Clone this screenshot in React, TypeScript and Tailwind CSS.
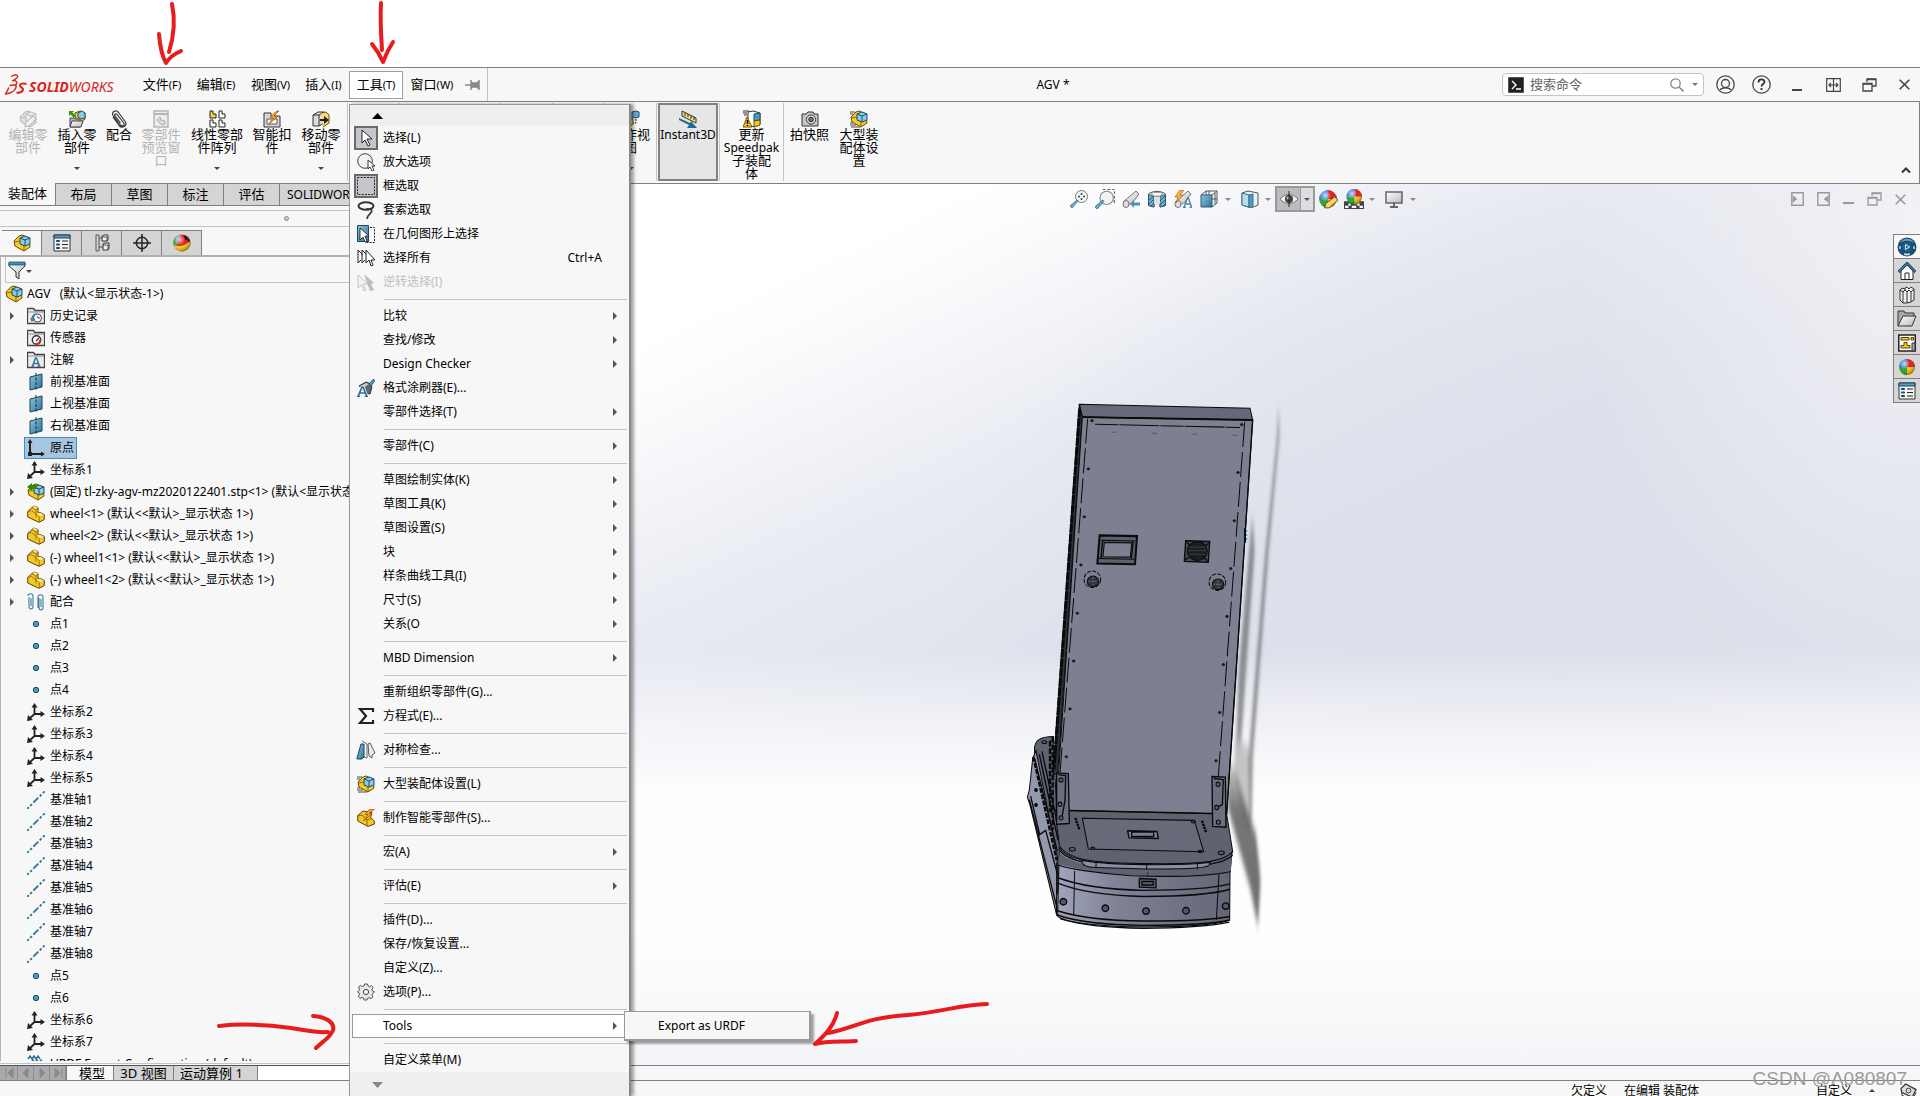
import React from "react";

const Svg = ({ children, className = "size-[18px]", box = "0 0 18 18" }: { children: React.ReactNode; className?: string; box?: string }) => (
  <svg viewBox={box} className={`${className} shrink-0`} fill="none" aria-hidden="true">
    {children}
  </svg>
);

const Defs = () => (
  <svg className="absolute size-0" aria-hidden="true">
    <defs>
      <linearGradient id="blue" x1="0" y1="0" x2="1" y2="1">
        <stop offset="0" stopColor="#8fc6dd" />
        <stop offset="1" stopColor="#2d7396" />
      </linearGradient>
      <linearGradient id="grey" x1="0" y1="0" x2="1" y2="1">
        <stop offset="0" stopColor="#fff" />
        <stop offset="1" stopColor="#b9b9b9" />
      </linearGradient>
      <radialGradient id="gloss" cx=".35" cy=".3" r=".7">
        <stop offset="0" stopColor="#fff" stopOpacity=".75" />
        <stop offset=".5" stopColor="#fff" stopOpacity="0" />
        <stop offset="1" stopColor="#000" stopOpacity=".35" />
      </radialGradient>
    </defs>
  </svg>
);

/* ---------- icons ---------- */
const PartIcon = () => (
  <Svg>
    <path d="M.7 6.500L5 2.500l2-1.500 4 1.500v5l2 0 4.300 2v5L12 17.300.7 12z" fill="#f4c824" stroke="#5d4108" />
    <path d="M5.500 2l2-1 3.500 1.500-2 1.500zM9 9l3.500-1.500L17 9.700 12 11.500z" fill="#fbe893" />
    <path d="M1 6.700L4.500 5.500 9 9v3.500M5 2.700L9 5V9l3.300 2.500V17M9 4.500l2-1.500" stroke="#8d6508" strokeWidth=".8" />
  </Svg>
);
const AsmShape = ({ yellow = "#f7cb24", edge = "#6b4a08", cube = "#8fc9e2", cubeEdge = "#18506c" }) => (
  <>
    <path d="M1 7l5-5 3-1 7 3 1 9-6 4L2 12z" fill={yellow} stroke={edge} />
    <path d="M2 8l4-1 5 5v4" stroke={edge} strokeWidth=".8" />
    <path d="M7 4l5-2 5 2v6l-5 2-5-2z" fill={cube} stroke={cubeEdge} />
    <path d="M7 4l5 2 5-2M12 6v6" stroke={cubeEdge} />
  </>
);
const AsmIcon = () => (
  <Svg>
    <AsmShape />
  </Svg>
);
const FastAsmIcon = () => (
  <Svg>
    <AsmShape />
    <path d="M0 2h5M0 4h3M0 13h3M0 15h6M1 17h9" stroke="#333" strokeWidth=".9" />
  </Svg>
);
const FixedAsmIcon = () => (
  <Svg>
    <AsmShape />
    <path d="M0 4l5-4v2h5v4H5v2z" fill="#2f8a12" />
  </Svg>
);
const GreyAsmPencil = () => (
  <Svg>
    <AsmShape yellow="#dedede" edge="#b5b5b5" cube="#eee" cubeEdge="#bbb" />
    <path d="m6 17 1-5 7-6 3 3-7 7z" fill="#eee" stroke="#b0b0b0" />
  </Svg>
);
const InsertIcon = () => (
  <Svg>
    <path d="M7 7V3l5-2 5 2v6l-4 3z" fill="#f7cb24" stroke="#6b4a08" />
    <path d="M10 3l4-2 3 2v5l-4 1-3-2z" fill="#8fc9e2" stroke="#18506c" />
    <path d="M2 8h4l1 1h5v8H2z" fill="#bbb" stroke="#444" />
    <path d="M4 11h11l-2 6H2z" fill="url(#grey)" stroke="#444" />
    <path d="M1 6V1h5L4.500 2.500 8 6 6 8 2.700 4.500z" fill="#2f9a18" />
  </Svg>
);
const ClipIcon = () => (
  <Svg>
    <path d="M3 7l6 8.500c3 3.500 8.500.5 6.500-3.500L8.500 2.500C6-.5 1 1.500 3 5.500l7.500 9.500c2 2 4.500.3 3.300-2L7 4.500C5.500 3 4 4 5 5.800l5.500 7.200" stroke="#3b3b3b" strokeWidth="1.200" />
  </Svg>
);
const PreviewIcon = () => (
  <Svg>
    <path d="M2 1h14v16H2z" fill="#ececec" stroke="#b5b5b5" strokeWidth="1.500" />
    <path d="M2 4h14" stroke="#b5b5b5" strokeWidth="2" />
    <path d="M5 10l3-3 1 3 4 1v3l-3 1z" fill="#ddd" stroke="#aaa" />
  </Svg>
);
const PatternIcon = () => (
  <Svg>
    <path d="M2 1h3v3h3v4H2z" fill="#f6d54a" stroke="#222" />
    <path d="M11 1h3v3h3v4h-6zM2 10h3v3h3v4H2zM11 10h3v3h3v4h-6z" fill="#fff" stroke="#222" />
  </Svg>
);
const SmartFastenerIcon = () => (
  <Svg>
    <path d="M1 3h7v3h9v11H1z" fill="#d8d8d8" stroke="#333" />
    <path d="M4 9h10v5H4z" fill="#fff" stroke="#555" />
    <path d="m14 1-7 6 3 1-4 6 8-7-3-1 5-5z" fill="#f6a81a" stroke="#b04a10" strokeWidth=".8" />
  </Svg>
);
const MoveIcon = () => (
  <Svg>
    <path d="M1 5l5-3h6v11l-5 3H1z" fill="#ddd" stroke="#333" />
    <path d="M1 5h6v11M7 5l5-3" stroke="#333" />
    <path d="M9 3l5-1 3 3v8l-6 4" fill="#f4dc75" stroke="#6b4a08" />
    <path d="M8 9h4V6l5 4-5 4v-3H8z" fill="#222" />
  </Svg>
);
const ExplodeIcon = () => (
  <Svg>
    <path d="M10 2l4-1 3 1v5l-3 1-4-1z" fill="#5fb0d4" stroke="#18506c" />
    <path d="M14 9v4H7" stroke="#222" strokeDasharray="2 1" />
    <path d="M2 9l5-2 4 2v5l-4 3-5-2z" fill="#f7cb24" stroke="#6b4a08" />
  </Svg>
);
const RulerIcon = () => (
  <Svg>
    <path d="M3 1l14 7v5L3 6z" fill="#f8dd6c" stroke="#333" />
    <path d="M6 3v3M9 4v3M12 6v3M15 7v3" stroke="#333" />
    <path d="M0 8l11 5 1-2 6 7H8l2-3L0 10z" fill="#1f6b96" />
  </Svg>
);
const UpdateIcon = () => (
  <Svg>
    <path d="M5 2l5-1 7 2v11l-6 3-6-3z" fill="#fff" stroke="#333" />
    <path d="M11 4l6-1v7l-6 1z" fill="#4d9cc0" stroke="#18506c" />
    <path d="M11 11l6-1v5l-6 2z" fill="#f7cb24" stroke="#6b4a08" />
    <path d="M0 1h6M0 3h4M1 5h3" stroke="#333" />
    <path d="M4 7l5 10H0z" fill="#f7c31a" stroke="#7a5300" />
    <path d="M4.500 10v4M4.500 15v1" stroke="#000" strokeWidth="1.500" />
  </Svg>
);
const CameraIcon = () => (
  <Svg>
    <path d="M1 4h4l2-2h5l1 2h4v12H1z" fill="#c5c5c5" stroke="#333" />
    <circle cx="10" cy="9.500" r="4.500" fill="#eee" stroke="#333" />
    <circle cx="10" cy="9.500" r="2.300" fill="#777" stroke="#222" />
  </Svg>
);
const ListIcon = () => (
  <Svg>
    <path d="M1 1h16v16H1z" fill="#f3f3f3" stroke="#333" />
    <path d="M1 1h16v3H1z" fill="#4f9dc0" stroke="#17465e" />
    <path d="M3.500 6.500h3v1h-3zM3.500 10h3v1h-3zM3.500 13.500h3v1h-3z" fill="#5ea9cb" stroke="#17465e" />
    <path d="M9 7h6M9 10.500h6M9 14h6" stroke="#222" />
  </Svg>
);
const ConfigIcon = () => (
  <Svg>
    <path d="M3 1h3v16H3zM6 4h4M6 13h4" stroke="#555" />
    <path d="M9 2l2-1h4v5l-1 1H9zM10 10l2-1h4v5l-1 2h-5z" fill="#eee" stroke="#333" />
    <path d="M9 3h5v4M10 11h5v5" stroke="#333" strokeWidth=".8" />
  </Svg>
);
const TargetIcon = () => (
  <Svg>
    <circle cx="9" cy="9" r="5.700" stroke="#222" strokeWidth="1.500" />
    <path d="M9 0v18M0 9h18" stroke="#222" strokeWidth="1.500" />
  </Svg>
);
const Ball = () => (
  <>
    <path d="M9 9V1a8 8 0 0 1 8 8z" fill="#e01b1b" />
    <path d="M9 9h8a8 8 0 0 1-8 8z" fill="#f2c417" />
    <path d="M9 9v8a8 8 0 0 1-8-8z" fill="#25a52c" />
    <path d="M9 9H1a8 8 0 0 1 8-8z" fill="#2f6fe0" />
    <circle cx="9" cy="9" r="8" fill="url(#gloss)" />
  </>
);
const BallIcon = () => (
  <Svg>
    <Ball />
  </Svg>
);
const DisplayBall = () => (
  <Svg>
    <circle cx="9" cy="9" r="8.500" fill="#e01b1b" />
    <path d="M9 .5C5 3 4 7 5 10L.7 11A8.500 8.500 0 0 1 9 .5z" fill="#5f9fd0" />
    <path d="M3 3c0 3 0 5 2 8l-4.300.5A8.500 8.500 0 0 1 3 3z" fill="#35a852" />
    <path d="M.8 11C6 13 12 12 17.300 7c1 6-3 10.500-8.300 10.500-4 0-7.500-3-8.200-6.500z" fill="#f5c91e" />
    <path d="M10 2c4-1 7 3 7 6-3-1-6-3-7-6z" fill="#2a0d0b" />
    <circle cx="9" cy="9" r="8.500" fill="url(#gloss)" />
  </Svg>
);
const PenBall = () => (
  <Svg className="size-[20px]">
    <Ball />
    <path d="M6 17l1-4 8-6 3 3-8 7z" fill="#f7d65a" stroke="#444" strokeWidth=".8" />
  </Svg>
);
const SceneBall = () => (
  <Svg className="size-[20px]">
    <path d="M0 11h18v7H0z" fill="#444" />
    <path d="M1 15h3v2H1zM7 15h4v2H7zM14 15h3v2h-3zM4 13h2v2H4zM12 13h2v2h-2z" fill="#fff" />
    <g transform="translate(1.300 -1) scale(.88)">
      <Ball />
    </g>
  </Svg>
);
const FilterIcon = () => (
  <Svg>
    <path d="M1 2h16v3l-6 6v7l-3-2v-5L1 5z" fill="url(#grey)" stroke="#333" />
    <path d="M1 1h16v3H1z" fill="#3f93ba" stroke="#17465e" strokeWidth=".7" />
  </Svg>
);
const Folder = ({ children }: { children: React.ReactNode }) => (
  <Svg>
    <path d="M.5 16.500V1.500h6l1.500 2h9.500v13z" fill="#ececec" stroke="#444" strokeWidth="1.300" />
    <path d="M1 5h16" stroke="#888" />
    {children}
  </Svg>
);
const HistoryIcon = () => (
  <Folder>
    <circle cx="10.500" cy="11" r="4" fill="#fff" stroke="#444" />
    <path d="M10 9l1 2h2" stroke="#444" />
    <path d="M4 11l1 3 3-2M5 13c0-4 2-6 5-6" stroke="#2b7da6" strokeWidth="1.400" />
  </Folder>
);
const SensorIcon = () => (
  <Folder>
    <circle cx="9.500" cy="11" r="4.200" fill="#fff" stroke="#333" strokeWidth="1.400" />
    <path d="M9 12l3-3" stroke="#333" strokeWidth="1.300" />
    <path d="M9 15c2 0 4-1 4-4" stroke="#d8331a" strokeWidth="2" />
  </Folder>
);
const NoteIcon = () => (
  <Folder>
    <path d="M5.500 15l3-8h1l3 8M7 12.500h4M4.500 15h2.500M10.500 15h3" stroke="#2f7398" strokeWidth="1.400" />
  </Folder>
);
const PlaneIcon = () => (
  <Svg>
    <path d="M3 4l12-3v13L3 17z" fill="url(#blue)" stroke="#17465e" />
    <path d="M9 0v18" stroke="#17303e" strokeDasharray="3 1.500" />
  </Svg>
);
const OriginIcon = () => (
  <Svg>
    <path d="M3 2v13h13" stroke="#222" strokeWidth="2" />
    <path d="M3 0l2.500 4h-5zM18 15l-4-2.500v5zM1 13h4v4H1z" fill="#222" />
  </Svg>
);
const AxesIcon = () => (
  <Svg>
    <path d="M7.500 3v8H15M7.500 11L2 16" stroke="#222" strokeWidth="1.800" />
    <path d="M7.500 0L10.500 4.500h-6zM18 11l-4.500-3v6zM0 18l1-6 5 5z" fill="#222" />
  </Svg>
);
const PointIcon = () => (
  <Svg>
    <circle cx="9" cy="9" r="2.700" fill="#4d9cc0" stroke="#17465e" />
  </Svg>
);
const AxisIcon = () => (
  <Svg>
    <path d="M0 18L18 0" stroke="#2d7396" strokeWidth="1.800" strokeDasharray="2.500 2 2.500 2 7 2 2.500 2" />
  </Svg>
);
const MatesIcon = () => (
  <Svg>
    <path d="M2 4v9c0 4 4 4 4 0V3c0-3-5-3-5 0M4 5v8M12 5v9c0 4 4 4 4 0V4c0-3-5-3-5 0v11M14 6v8" stroke="#3d7f9f" strokeWidth="1.100" />
  </Svg>
);
const CoilIcon = () => (
  <Svg>
    <path d="M1 4l2-3 2 3 2-3 2 3 2-3 2 3M4 8l2-3 2 3 2-3 2 3 2-3 2 3" stroke="#2f6f8e" strokeWidth="1.400" />
  </Svg>
);
const CursorIcon = () => (
  <Svg>
    <path d="M5 1v13l3-3 3 6 2-1-3-6h5z" fill="#fff" stroke="#222" />
  </Svg>
);
const MagSelIcon = () => (
  <Svg>
    <circle cx="8" cy="8" r="7.300" stroke="#444" fill="#f2f2f2" />
    <path d="M11 7v9l2-2 2 4 2-1-2-4h3z" fill="#fff" stroke="#222" strokeWidth=".9" />
  </Svg>
);
const BoxSelIcon = () => (
  <Svg>
    <path d="M.5.5h17v17H.5z" stroke="#222" strokeDasharray="2 1.200" />
  </Svg>
);
const LassoIcon = () => (
  <Svg>
    <ellipse cx="9" cy="5" rx="7.500" ry="3.800" stroke="#333" strokeWidth="2" />
    <path d="M9 8h4c4 1 0 5-2 7l-1 3" stroke="#333" strokeWidth="1.700" />
  </Svg>
);
const GeoSelIcon = () => (
  <Svg>
    <path d="M.5.5h11v16H.5z" fill="url(#blue)" stroke="#17465e" />
    <path d="M13 2.500h4.500v15H8" stroke="#222" strokeDasharray="2 1.200" />
    <path d="M3 3v12l3-3 2 5 2-1-2-5h4z" fill="#fff" stroke="#222" strokeWidth=".9" />
  </Svg>
);
const AllSelIcon = () => (
  <Svg>
    <path d="M1 1v13l3-3M1 1l5 5M5 1v13l3-3M5 1l5 5" stroke="#222" />
    <path d="M9 1v13l3-3 2 6 2-1-2-5h4z" fill="#fff" stroke="#222" />
  </Svg>
);
const InvSelIcon = () => (
  <Svg>
    <path d="M7 1l10 9-3 1 3 6-4 1z" fill="#bdbdbd" />
    <path d="M1 2v13l3-3 3 6 2-1-3-6h5z" fill="#f3f3f3" stroke="#c4c4c4" />
  </Svg>
);
const PaintIcon = () => (
  <Svg>
    <path d="M2 7l7-4 3 1 3 4-2 7-4-1-4-6z" fill="#666" stroke="#333" />
    <path d="M4 7l5-3 3 1-6 4z" fill="#ccc" />
    <path d="M12 5l4.500-5L18 1.500 14 7z" fill="#4d9cc0" stroke="#17465e" strokeWidth=".8" />
    <path d="M1 17.500L5 8h1l4 9.500M3 14h5M0 17.500h3M7.500 17.500h3.500" stroke="#f7f7f7" strokeWidth="3.200" />
    <path d="M1 17.500L5 8h1l4 9.500M3 14h5M0 17.500h3M7.500 17.500h3.500" stroke="#2b6f96" strokeWidth="1.700" />
  </Svg>
);
const SigmaIcon = () => (
  <Svg>
    <path d="M16 5V2H3l6 7-6 7h13v-3" stroke="#222" strokeWidth="2.200" />
  </Svg>
);
const SymIcon = () => (
  <Svg className="size-[20px]" box="0 0 20 20">
    <path d="M1 18L5 4h3v13l-2 2H1z" fill="url(#blue)" stroke="#17465e" />
    <path d="M6 1l5 3v14l-3-1" stroke="#666" />
    <path d="M12 4l2-1 5 10-3 2v3l-3-2z" fill="#eee" stroke="#555" />
  </Svg>
);
const SmartPartIcon = () => (
  <Svg>
    <path d="M.7 6.500L6 2l9 1.500-1.500 5 3.800 3.500v3L11 17.500.7 12z" fill="#f4c824" stroke="#5d4108" />
    <path d="M1 7l4-1 5 5v6M10 11l5-2" stroke="#8d6508" />
    <path d="M17.500 0H13L8 5.500h3L6.500 12 15 4.500h-3z" fill="#f8b030" stroke="#a8410c" strokeWidth=".8" />
  </Svg>
);
const GearIcon = () => (
  <Svg>
    <path d="M7.500 1h3l.5 2 1.500.7L14.500 2.500l1.500 2-1 2 .5 1.500L17.500 9l-2 1.500-.5 1.500 1 2-2 1.700-2-1-1.500.6-.5 1.700h-3L6.500 15 5 14.500l-2 .8-1.500-2 1-2-.5-1.500L.5 9 2 7.500 2.500 6l-1-2L3.500 2.500l2 1L7 3z" fill="#e6e6e6" stroke="#444" strokeWidth=".9" />
    <circle cx="9" cy="9" r="2.600" fill="#f7f7f7" stroke="#444" />
  </Svg>
);
const Caret = ({ c = "#444", className = "" }) => (
  <svg viewBox="0 0 6 3" className={`h-[3px] w-[6px] shrink-0 ${className}`} aria-hidden="true">
    <path d="M0 0h6L3 3z" fill={c} />
  </svg>
);
const RightTri = ({ className = "" }) => (
  <svg viewBox="0 0 4 8" className={`h-2 w-1 shrink-0 ${className}`} aria-hidden="true">
    <path d="M0 0l4 4-4 4z" fill="#555" />
  </svg>
);
const Handle = () => <path d="M8 11l-6 7-2-2 7-6z" fill="#6aaed0" stroke="#35708e" strokeWidth=".8" />;
const ZoomFit = () => (
  <Svg>
    <circle cx="11.500" cy="6.500" r="6" fill="#f2f5f8" stroke="#777" />
    <path d="M11.500 3v2M11.500 8v2M8 6.500h2M13 6.500h2" stroke="#444" strokeWidth="1.600" />
    <Handle />
  </Svg>
);
const ZoomArea = () => (
  <Svg className="size-[20px]">
    <path d="M7 .5h10.500V13" stroke="#666" strokeDasharray="2.500 1.500" />
    <circle cx="10.500" cy="8" r="6" fill="#eef3f3" stroke="#888" />
    <Handle />
  </Svg>
);
const Scope = ({ children }: { children?: React.ReactNode }) => (
  <Svg>
    <path d="M1 12l6-5 7-6 3 3-6 8-6 4z" fill="url(#grey)" stroke="#777" />
    <ellipse cx="4" cy="14" rx="3" ry="3.500" fill="#ddd" stroke="#777" />
    {children}
  </Svg>
);
const PrevView = () => (
  <Scope>
    <path d="M8 14l4-4v2.500h6v3h-6V18z" fill="#4d93b8" />
  </Scope>
);
const DynNote = () => (
  <Scope>
    <path d="M6 0L1 7h3l-2 6 7-8H6l4-5z" fill="#f9b44a" stroke="#b5632a" strokeWidth=".8" />
    <path d="M10 17l3.500-9h1l3 9M11.500 14h4.500M9 17.500h3M15.500 17.500H18" stroke="#4d86a6" strokeWidth="1.400" />
  </Scope>
);
const SectionView = () => (
  <Svg>
    <path d="M.5 4c4-3.500 13-3.500 17 0v11.500L12 17V7H6v10L.5 15.500z" fill="#f1f1f1" stroke="#555" />
    <path d="M.5 4.500L6 6.500V17L.5 15.500zM12 6.500l5.500-2v11L12 17z" fill="#6fb2d0" stroke="#285a74" />
    <path d="M1 10l4-3M1 14l5-5M3 16l3-3M12 11l5-5M12 15l5-5M15 16l2-2" stroke="#17465e" strokeWidth=".8" />
    <path d="M6 6.500h6V14l-3 1-3-1z" fill="#e0e0e0" />
    <path d="M3 3.500c3-1.500 9-1.500 12 0L12 6H6z" fill="#fff" stroke="#777" strokeWidth=".7" />
  </Svg>
);
const OrientIcon = () => (
  <Svg>
    <path d="M1 5l5-4h11v12l-5 4M12 5l5-4M6 1v4M9 1v4M12 9h5M15 3v11" stroke="#555" />
    <path d="M1 5h11v12H1z" fill="url(#blue)" stroke="#285a74" />
  </Svg>
);
const StyleIcon = () => (
  <Svg>
    <path d="M1 3l6-2 10 2v12l-7 3-9-3z" fill="#e8f2f6" stroke="#555" />
    <path d="M1 3l7 2v12l-7-2z" fill="#b8dcea" stroke="#35708e" />
    <path d="M8 5l4-1v12l-4 2z" fill="#4d9cc0" stroke="#35708e" />
  </Svg>
);
const EyeIcon = () => (
  <Svg>
    <path d="M0 9c5-6 13-6 18 0-5 6-13 6-18 0z" fill="#eee" stroke="#777" />
    <circle cx="9" cy="9" r="4" fill="#444" />
    <circle cx="8" cy="8" r="1.500" fill="#bbb" />
    <path d="M9 1v16" stroke="#222" />
  </Svg>
);
const MonitorIcon = () => (
  <Svg>
    <path d="M1 2h16v11H1z" fill="url(#grey)" stroke="#666" strokeWidth="1.500" />
    <path d="M9 13v4M5 17h8" stroke="#666" strokeWidth="2" />
  </Svg>
);
const CompassIcon = () => (
  <Svg className="size-[20px]" box="0 0 20 20">
    <circle cx="10" cy="10" r="9.500" fill="#174f70" />
    <path d="M3 6a8 8 0 0 1 14 0c-4-3-10-3-14 0z" fill="#6c9db5" />
    <circle cx="10" cy="10" r="4.500" fill="#1f658b" />
    <path d="M8.500 7.500l4 2.500-4 2.500z" stroke="#cfe6f2" />
    <path d="M3 9v3M17 9v3M8 16v1.500h4V16" stroke="#d5e6ef" strokeWidth="1.300" />
  </Svg>
);
const HomeIcon = () => (
  <Svg>
    <path d="M3 9l6-6 6 6v8.500H3z" fill="#fff" stroke="#222" />
    <path d="M7 17v-6h4v6" stroke="#222" />
    <path d="M.5 10L9 1.500l8.500 8.500" stroke="#17465e" strokeWidth="3" />
    <path d="M.8 9.700L9 1.500l8.200 8.200" stroke="#5ea9cb" />
  </Svg>
);
const BooksIcon = () => (
  <Svg>
    <path d="M2 4l3 2v11l-3-3zM5 6l2-2 2 2v11H5M7 4V2l2-1 2 2M9 6l2-2 2 2v10l-4 1M11 3l2-2 3 2v11l-3 2M13 6l3-3M2 4l2-2 3 1" fill="#eee" stroke="#333" />
  </Svg>
);
const OpenFolder = () => (
  <Svg className="size-[20px]" box="0 0 20 20">
    <path d="M1 17V2h6l1 2h9v3" fill="#aaa" stroke="#333" />
    <path d="M1 17L6 7h13l-4 10z" fill="url(#grey)" stroke="#333" />
  </Svg>
);
const ViewPalette = () => (
  <Svg>
    <path d="M.8 1h16.500v16H.8z" fill="#fff" stroke="#222" strokeWidth="1.500" />
    <path d="M3 3.500h8v2.500H3zM13 3.500h2.500V6H13zM6 8.500h3v3h3V14H3v-2.500h3z" fill="#f6cd2a" stroke="#5d4300" />
    <path d="M14 9h3v8h-3z" fill="#aaa" stroke="#333" />
  </Svg>
);
const PinIcon = () => (
  <Svg className="h-[10px] w-[15px]" box="0 0 15 10">
    <path d="M0 5h6M6 0v10M7 3l5 0 2-2v8l-2-2H7z" stroke="#888" fill="#888" strokeWidth="1.500" />
  </Svg>
);
const Restore = ({ c = "#444" }) => (
  <Svg className="h-[14px] w-[15px]" box="0 0 15 14">
    <path d="M5 4V1h9v7h-4M1 5.500h9V13H1z" stroke={c} strokeWidth="1.300" />
    <path d="M1 6h9M5 1.500h9" stroke={c} strokeWidth="1.500" />
  </Svg>
);
const CloseX = ({ c = "#444" }) => (
  <Svg className="size-[11px]" box="0 0 11 11">
    <path d="M.7.7l9.600 9.600M10.300.7L.7 10.300" stroke={c} strokeWidth="1.600" />
  </Svg>
);

/* ---------- title bar ---------- */
const Logo = () => (
  <div className="flex w-[135px] shrink-0 items-center gap-px pl-1 text-[#d8261c]" aria-label="SOLIDWORKS">
    <svg viewBox="0 0 24 22" className="h-[22px] w-6" fill="none" stroke="#d8261c" strokeLinejoin="round" aria-hidden="true">
      <path d="M7 2.500c3-2 7.500-2 6.500.5-1 2-3 3-5 3.800 4-.8 5.500 1.200 3 4.700" strokeWidth="1.400" />
      <path d="M5.500 11.500c4-1 7.500-1 6.500 2s-5 6-10.500 6.500L5 13.500" strokeWidth="1.500" />
      <path d="M22.500 10c-3-1-6.500-.5-6.500 1.500s4 2.500 3 4.500-3.500 3-6.500 2.800" strokeWidth="2" />
    </svg>
    <span className="pt-1 text-[14px] leading-4 italic">
      <b>SOLID</b>WORKS
    </span>
  </div>
);

const topMenus: [string, string, string][] = [
  ["文件", "(F)", "w-[54px]"],
  ["编辑", "(E)", "w-[54px]"],
  ["视图", "(V)", "w-[55px]"],
  ["插入", "(I)", "w-[51px]"],
  ["工具", "(T)", "w-[54px] bg-white border-[#a0a0a0]"],
  ["窗口", "(W)", "w-[58px]"],
];

const TitleBar = () => (
  <header className="flex h-[35px] shrink-0 items-center border-y border-[#808080] bg-[#f7f7f7]">
    <Logo />
    <nav className="flex h-full items-center border-r border-[#c0c0c0] pr-1">
      {topMenus.map(([t, k, w]) => (
        <button key={t} className={`flex h-7 items-center justify-center border text-[13px] ${w} ${w.includes("bg-white") ? "" : "border-transparent"}`}>
          {t}
          <span className="pt-0.5 text-[11px]">{k}</span>
        </button>
      ))}
      <button aria-label="固定" className="flex w-[22px] justify-center">
        <PinIcon />
      </button>
    </nav>
    <h1 className="flex-1 pl-[116px] text-center text-[12px]">AGV *</h1>
    <label className="mr-3 flex h-[23px] w-[202px] shrink-0 items-center rounded-sm border border-[#c4c4c4] bg-white px-[5px]">
      <Svg className="size-4" box="0 0 16 16">
        <path d="M.5.500h15v15H.5z" fill="#222" stroke="#555" />
        <path d="M4 4l4 4-4 4M8 12h5" stroke="#fff" strokeWidth="1.400" />
      </Svg>
      <input aria-label="搜索命令" placeholder="搜索命令" className="ml-1.5 w-0 flex-1 text-[13px] outline-none placeholder:text-[#666]" />
      <Svg className="size-[14px]" box="0 0 14 14">
        <circle cx="5.500" cy="5.500" r="4.700" stroke="#888" strokeWidth="1.300" />
        <path d="M9 9l4.500 4.500" stroke="#888" strokeWidth="1.600" />
      </Svg>
      <Caret c="#777" className="ml-2" />
    </label>
    <div className="flex shrink-0 items-center">
      <button aria-label="用户" className="flex w-9 justify-start">
        <Svg className="size-[19px]" box="0 0 19 19">
          <circle cx="9.500" cy="9.500" r="8.700" stroke="#444" strokeWidth="1.300" />
          <circle cx="9.500" cy="8.500" r="4" stroke="#444" strokeWidth="1.300" />
          <path d="M4 15c2-3 9-3 11 0" stroke="#444" strokeWidth="1.300" />
        </Svg>
      </button>
      <button aria-label="帮助" className="flex w-[38px]">
        <Svg className="size-[19px]" box="0 0 19 19">
          <circle cx="9.500" cy="9.500" r="8.700" stroke="#444" strokeWidth="1.300" />
          <path d="M6.500 7.500c0-4 6-4 6-.5 0 2-3 2-3 4.500M9.500 13v2" stroke="#333" strokeWidth="1.800" />
        </Svg>
      </button>
      <button aria-label="最小化" className="flex h-4 w-9 items-end pb-0.5 pl-0.5">
        <span className="h-0.5 w-[10px] bg-[#444]" />
      </button>
      <button aria-label="展开" className="flex w-9">
        <Svg className="h-[14px] w-[15px]" box="0 0 15 14">
          <path d="M.7.700h13.600v12.600H.7zM7.500 0v14M3 7h9M5 5L3 7l2 2M10 5l2 2-2 2" stroke="#444" strokeWidth="1.200" />
        </Svg>
      </button>
      <button aria-label="还原" className="flex w-[37px]">
        <Restore />
      </button>
      <button aria-label="关闭" className="flex w-[21px]">
        <CloseX />
      </button>
    </div>
  </header>
);

/* ---------- ribbon ---------- */
const RibbonItem = ({ icon, lines, w, disabled, caret, active }: { icon: React.ReactNode; lines: string[]; w: string; disabled?: boolean; caret?: boolean; active?: boolean }) => (
  <button disabled={disabled} className={`flex shrink-0 flex-col items-center text-[13px] leading-[13px] ${w} ${active ? "border-2 border-[#808080] bg-[#e6e6e6] pt-[5px] pb-0.5" : "py-[7px]"} ${disabled ? "text-[#b4b4b4]" : "text-black"}`}>
    {icon}
    {lines.map((l) => (
      <span key={l} className={`whitespace-nowrap ${/[A-Z]/.test(l) ? "text-[12px]" : ""}`}>
        {l}
      </span>
    ))}
    {caret && <Caret className="mt-auto mb-1" />}
  </button>
);
const Sep = () => <span className="w-px shrink-0 bg-[#c4c4c4]" />;

const Ribbon = () => (
  <section className="flex h-[81px] shrink-0 border-r border-[#808080] bg-[#f7f7f7] pt-px pb-0.5 pl-[3px]">
    <RibbonItem w="w-[50px]" icon={<GreyAsmPencil />} lines={["编辑零", "部件"]} disabled />
    <RibbonItem w="w-12" icon={<InsertIcon />} lines={["插入零", "部件"]} caret />
    <RibbonItem w="w-9" icon={<ClipIcon />} lines={["配合"]} />
    <RibbonItem w="w-12" icon={<PreviewIcon />} lines={["零部件", "预览窗", "口"]} disabled />
    <RibbonItem w="w-16" icon={<PatternIcon />} lines={["线性零部", "件阵列"]} caret />
    <RibbonItem w="w-[46px]" icon={<SmartFastenerIcon />} lines={["智能扣", "件"]} />
    <RibbonItem w="w-[52px]" icon={<MoveIcon />} lines={["移动零", "部件"]} caret />
    <Sep />
    <span className="w-[51px] shrink-0" />
    <Sep />
    <span className="w-[100px] shrink-0" />
    <Sep />
    <span className="w-[51px] shrink-0" />
    <Sep />
    <span className="w-[51px] shrink-0" />
    <Sep />
    <RibbonItem w="w-[51px]" icon={<ExplodeIcon />} lines={["爆炸视", "图"]} caret />
    <Sep />
    <span className="w-px shrink-0" />
    <RibbonItem w="w-[60px]" icon={<RulerIcon />} lines={["Instant3D"]} active />
    <span className="w-px shrink-0" />
    <Sep />
    <RibbonItem w="w-[63px]" icon={<UpdateIcon />} lines={["更新", "Speedpak", "子装配", "体"]} />
    <Sep />
    <RibbonItem w="w-[51px]" icon={<CameraIcon />} lines={["拍快照"]} />
    <RibbonItem w="w-12" icon={<FastAsmIcon />} lines={["大型装", "配体设", "置"]} />
    <button aria-label="收起" className="mt-auto mr-2 mb-2 ml-auto">
      <svg viewBox="0 0 10 6" className="h-1.5 w-[10px]" fill="none" aria-hidden="true">
        <path d="M1 5.500L5 1.500l4 4" stroke="#333" strokeWidth="2" />
      </svg>
    </button>
  </section>
);

/* ---------- feature tree ---------- */
type Row = { t: string; icon: React.ReactNode; open?: boolean; sel?: boolean };
const tree: Row[] = [
  { t: "历史记录", icon: <HistoryIcon />, open: true },
  { t: "传感器", icon: <SensorIcon /> },
  { t: "注解", icon: <NoteIcon />, open: true },
  { t: "前视基准面", icon: <PlaneIcon /> },
  { t: "上视基准面", icon: <PlaneIcon /> },
  { t: "右视基准面", icon: <PlaneIcon /> },
  { t: "原点", icon: <OriginIcon />, sel: true },
  { t: "坐标系1", icon: <AxesIcon /> },
  { t: "(固定) tl-zky-agv-mz2020122401.stp<1> (默认<显示状态-1>)", icon: <FixedAsmIcon />, open: true },
  { t: "wheel<1> (默认<<默认>_显示状态 1>)", icon: <PartIcon />, open: true },
  { t: "wheel<2> (默认<<默认>_显示状态 1>)", icon: <PartIcon />, open: true },
  { t: "(-) wheel1<1> (默认<<默认>_显示状态 1>)", icon: <PartIcon />, open: true },
  { t: "(-) wheel1<2> (默认<<默认>_显示状态 1>)", icon: <PartIcon />, open: true },
  { t: "配合", icon: <MatesIcon />, open: true },
  ...["点1", "点2", "点3", "点4"].map((t) => ({ t, icon: <PointIcon /> })),
  ...["坐标系2", "坐标系3", "坐标系4", "坐标系5"].map((t) => ({ t, icon: <AxesIcon /> })),
  ...[1, 2, 3, 4, 5, 6, 7, 8].map((n) => ({ t: `基准轴${n}`, icon: <AxisIcon /> })),
  ...["点5", "点6"].map((t) => ({ t, icon: <PointIcon /> })),
  ...["坐标系6", "坐标系7"].map((t) => ({ t, icon: <AxesIcon /> })),
  { t: "URDF Export Configuration (default)", icon: <CoilIcon /> },
];

const cmdTabs = ["装配体", "布局", "草图", "标注", "评估", "SOLIDWORKS 插件"];
const panelTabs = [
  { n: "特征树", i: <AsmIcon /> },
  { n: "属性", i: <ListIcon /> },
  { n: "配置", i: <ConfigIcon /> },
  { n: "尺寸专家", i: <TargetIcon /> },
  { n: "显示", i: <DisplayBall /> },
];

const LeftPanel = () => (
  <aside className="flex w-[349px] shrink-0 flex-col overflow-hidden bg-[#f7f7f7]">
    <div className="flex h-[23px] shrink-0 border-b border-[#808080] text-[13px]">
      {cmdTabs.map((t, i) => (
        <button key={t} className={`shrink-0 whitespace-nowrap ${i === 0 ? "w-[55px]" : "border-t border-l border-[#808080] bg-[#d4d4d4]"} ${i > 0 && i < 5 ? "w-[56px]" : ""} ${i === 5 ? "px-[7px] text-[12px]" : ""}`}>
          {t}
        </button>
      ))}
    </div>
    <div className="mt-1 flex h-[17px] shrink-0 items-center justify-end border-y border-[#c4c4c4] pr-[60px]">
      <span className="size-[5px] rounded-full border border-[#888] bg-[#ccc]" />
    </div>
    <div className="mt-[3px] flex h-[27px] shrink-0 border-b-2 border-[#b0b0b0] pl-0.5">
      {panelTabs.map((p, i) => (
        <button key={p.n} aria-label={p.n} className={`flex w-10 items-center justify-center border-t border-r border-[#808080] ${i ? "bg-[#d4d4d4]" : "bg-[#f7f7f7]"}`}>
          {p.i}
        </button>
      ))}
    </div>
    <div className="flex min-h-0 flex-1 flex-col overflow-hidden border-l border-[#b4b4b4]">
      <button aria-label="筛选" className="ml-1 flex h-[26px] shrink-0 items-center border-b border-l border-[#c4c4c4] pl-0.5">
        <FilterIcon />
        <Caret className="mt-1" />
      </button>
      <ul className="min-h-0 flex-1 overflow-hidden text-[12px] leading-[22px] whitespace-nowrap">
        <li className="flex h-[22px] items-center gap-1 pl-1">
          <AsmIcon />
          <span>AGV&nbsp;&nbsp; (默认&lt;显示状态-1&gt;)</span>
        </li>
        {tree.map((r) => (
          <li key={r.t} className="flex h-[22px] items-center pl-[9px]">
            <span className="w-[14px] shrink-0">{r.open && <RightTri />}</span>
            <span className={`flex h-[22px] items-center gap-[5px] border px-0.5 ${r.sel ? "border-[#3f8fc0] bg-[#a6c6e2]" : "border-transparent"}`}>
              {r.icon}
              <span>{r.t}</span>
            </span>
          </li>
        ))}
      </ul>
    </div>
    <div className="h-[5px] shrink-0 border-b border-[#555]">
      <div className="mt-[2px] h-px bg-[#c4c4c4]" />
    </div>
  </aside>
);

/* ---------- graphics area ---------- */
const holes: [number, number][] = [[276, 114], [265, 249], [253, 383], [243, 518], [232, 653], [221, 787], [210, 921], [199, 1055], [725, 125], [714, 259], [703, 394], [692, 528], [681, 662], [670, 797], [659, 931], [648, 1066]];

const Model = () => (
  <svg viewBox="0 0 960 1568" preserveAspectRatio="none" className="absolute top-[196px] left-[651px] h-[560px] w-[320px]" fill="none" stroke="#0a0a0c" strokeWidth="3" role="img" aria-label="AGV">
    <defs>
      <filter id="soft" x="-50%" y="-10%" width="200%" height="120%">
        <feGaussianBlur stdDeviation="5 16" />
      </filter>
      <linearGradient id="side" x1="0" y1="0" x2="1" y2="0">
        <stop offset="0" stopColor="#a0a4ba" />
        <stop offset=".35" stopColor="#7f8295" />
        <stop offset="1" stopColor="#636675" />
      </linearGradient>
      <linearGradient id="fade" x1="0" y1="0" x2="0" y2="1">
        <stop offset="0" stopColor="#666" stopOpacity=".3" />
        <stop offset=".3" stopColor="#555" stopOpacity=".8" />
        <stop offset="1" stopColor="#555" stopOpacity=".85" />
      </linearGradient>
    </defs>
    <g filter="url(#soft)" stroke="none" fill="#555">
      <path d="M834 70l5 80-33 330-36 440-12 150-2 160-8 20-4-180 14-160 36-410 38-350z" opacity=".58" />
      <path d="M757 380l7 100-20 260-20 270-16 10 8-200 30-330z" opacity=".6" />
      <path d="M706 1000l54 40-8 220-20-20-30-150z" fill="#999" opacity=".55" />
      <path d="M684 1060l28 50 38 120 18 40 14 130-8 130-24-110-66-220z" fill="url(#fade)" />
    </g>
    {/* rear deck and left skirt */}
    <path d="M104 1040c-4-30 16-42 56-42l12 252 12 70-12 120-68-380z" fill="#5f626f" />
    <path d="M98 1060l10-22 64 300-2 160-80-308-8-22 6-20z" fill="#9498ad" />
    <path d="M88 1175l85 310M92 1165l27 108 18-12 36 125M104 1060l68 260M118 1048l56 240M126 1040l46 200" strokeWidth="4" />
    <path d="M100 1055l70 290" strokeWidth="7" strokeDasharray="14 4" />
    <path d="M150 1010v200M158 1000v260" strokeWidth="7" strokeDasharray="16 5" />
    <circle cx="108" cy="1148" r="4" fill="#111" />
    <circle cx="108" cy="1190" r="4" fill="#111" />
    <ellipse cx="133" cy="1014" rx="7" ry="4" />
    {/* column */}
    <path d="M238 68l512 11 8 33-511-8z" fill="#666977" />
    <path d="M238 68l9 36-74 1000-14 0z" fill="#30323a" />
    <path d="M239 80L162 1090" strokeWidth="9" strokeDasharray="24 3" />
    <path d="M247 104l511 8-78 1104-512-8z" fill="#7d8091" />
    <path d="M247 104l511 8" strokeWidth="5" />
    <path d="M758 112l-78 1104" strokeWidth="4" />
    <path d="M263 108L180 1100M734 118L655 1110" strokeWidth="3" strokeDasharray="70 14" />
    <path d="M285 124l435 9" strokeWidth="3" strokeDasharray="70 3 120 3" />
    <path d="M335 146l380 9" strokeWidth="2" strokeDasharray="15 106" stroke="#444754" />
    {holes.map(([x, y]) => (
      <ellipse key={`${x}-${y}`} cx={x} cy={y} rx="4" ry="3" fill="#222" strokeWidth="2" />
    ))}
    {/* screen */}
    <path d="M299 435l112 2-6 79-113-2z" fill="#5c5f6d" strokeWidth="6" />
    <path d="M304 449l102 2M296 500l107 2M313 455l82 1-4 40-82-1z" fill="#7d8091" strokeWidth="3" />
    <path d="M308 449l-5 51M400 450l-6 50" strokeWidth="4" />
    {/* speaker */}
    <path d="M557 450l72 2-4 58-72-2z" fill="#4a4d58" strokeWidth="4" />
    <ellipse cx="592" cy="479" rx="30" ry="27" fill="#1c1d22" />
    <path d="M568 468h50M564 478h56M566 488h52" stroke="#4a4d58" strokeWidth="2" />
    <path d="M560 455l10 8M626 457l-9 7M556 504l10-8M622 506l-10-8" strokeWidth="4" />
    {/* knobs */}
    {[277, 652].map((x, i) => (
      <g key={x}>
        <ellipse cx={x} cy={558 + i * 8} rx="25" ry="23" strokeDasharray="12 4" />
        <ellipse cx={x + 2} cy={564 + i * 8} rx="17" ry="15" fill="#33353d" />
        <path d={i ? "M640 572h26M654 560v26" : "M266 564h26M279 552v26"} stroke="#8588a0" strokeWidth="2" strokeDasharray="5 4" />
      </g>
    ))}
    <path d="M735 415v40" strokeWidth="6" />
    <path d="M740 420v34" stroke="#2a88b8" strokeDasharray="6 5" />
    {/* deck */}
    <path d="M165 1205l515 10 18 105c-10 30-100 36-250 34-150 0-240-6-270-50z" fill="#5f626f" />
    <path d="M205 1205l440 9" strokeWidth="4" />
    <path d="M247 1227l336 6 28 88-346-8z" fill="#676a78" />
    <path d="M383 1262l88 2 4 20-88-2zM395 1266h66v12h-66z" fill="#7d8091" strokeWidth="4" />
    <path d="M226 1226l12 32M606 1234l12 32" strokeWidth="7" strokeDasharray="7 2" />
    <ellipse cx="217" cy="1314" rx="9" ry="5" />
    <ellipse cx="664" cy="1324" rx="9" ry="5" />
    <ellipse cx="278" cy="1311" rx="6" ry="3" />
    <ellipse cx="600" cy="1320" rx="6" ry="3" />
    <ellipse cx="580" cy="1237" rx="6" ry="3" />
    {/* brackets */}
    <path d="M170 1100l35 2 3 140-38 2zM175 1105l22 3-2 70-10 50" fill="#6c6f7e" strokeWidth="4" />
    <path d="M636 1110l40 2 2 140-40-2zM642 1116l28 3-3 70-18 10" fill="#6c6f7e" strokeWidth="4" />
    {[[183, 1120], [180, 1188], [183, 1226], [654, 1132], [650, 1197], [655, 1238]].map(([x, y]) => (
      <ellipse key={`${x}-${y}`} cx={x} cy={y} rx="6" ry="6" fill="#5c5f6d" />
    ))}
    {/* front body */}
    <path d="M178 1310c40 50 180 44 270 46 140 0 220-4 248-34l-6 60-1 130c-60 26-460 30-516-10z" fill="url(#side)" />
    <path d="M180 1322c40 46 190 44 270 46 140 0 220-6 246-34l-4 44c-60 14-150 16-252 12-100-6-190-16-266-34z" fill="#5f626f" stroke="none" />
    <path d="M180 1318c40 46 190 44 270 46 140 0 220-6 248-34" strokeWidth="4" />
    <path d="M245 1345c0 16 20 20 43 20l152 4c100 0 170 0 187-10l4-8c-100 10-300 8-386-6z" fill="#8c8fa3" />
    <path d="M288 1350v14M440 1358v12M592 1355v14" />
    <path d="M174 1358c30 10 120 24 220 30 120 4 240 0 298-12" />
    <path d="M172 1393c60 22 160 34 260 36 110 0 200-4 258-18M172 1408c60 24 160 36 260 38 110 0 200-4 258-20" strokeWidth="4" />
    <path d="M172 1486c60 18 160 28 260 29 110 0 200-2 258-13M172 1498c60 20 160 28 260 29 110 0 200-2 258-15M180 1508c60 18 160 26 250 27 110 0 190-4 258-17" strokeWidth="4" />
    <path d="M224 1374l-3 124M657 1384l-8 128M170 1350v150" />
    <path d="M418 1396l50 2v24l-50-2zM426 1404h34v10h-34z" fill="#5c5f6d" strokeWidth="4" />
    {[[190, 1461], [316, 1479], [438, 1487], [558, 1486], [677, 1473]].map(([x, y]) => (
      <ellipse key={x} cx={x} cy={y} rx="10" ry="9" fill="#555866" strokeWidth="4" />
    ))}
    <path d="M443 1380v10" strokeDasharray="3 3" />
  </svg>
);

const viewTools: [string, React.ReactNode][] = [
  ["整屏显示全图", <ZoomFit />],
  ["局部放大", <ZoomArea />],
  ["上一视图", <PrevView />],
  ["剖面视图", <SectionView />],
  ["动态注解视图", <DynNote />],
  ["视图定向", <OrientIcon />],
];

const HeadsUp = () => (
  <div className="flex shrink-0 items-center" role="toolbar" aria-label="前导视图">
    {viewTools.map(([n, ic]) => (
      <button key={n} aria-label={n} className="flex w-[26px] justify-center">
        {ic}
      </button>
    ))}
    <Caret c="#888" className="mx-[3px]" />
    <button aria-label="显示样式" className="ml-1 flex w-6 justify-center">
      <StyleIcon />
    </button>
    <Caret c="#888" className="mr-1 ml-[3px]" />
    <div className="flex h-[26px] w-10 shrink-0 border-2 border-[#999] bg-[#bcbcc0]">
      <button aria-label="隐藏/显示" className="flex w-6 items-center justify-center border-r border-[#999]">
        <EyeIcon />
      </button>
      <button aria-label="更多" className="flex flex-1 items-center justify-center bg-[#dcdde2]">
        <Caret c="#555" />
      </button>
    </div>
    <button aria-label="编辑外观" className="flex w-[26px] justify-center">
      <PenBall />
    </button>
    <button aria-label="应用布景" className="flex w-[25px] justify-center">
      <SceneBall />
    </button>
    <Caret c="#888" className="mx-[3px]" />
    <button aria-label="视图设定" className="ml-[3px] flex w-[26px] justify-center">
      <MonitorIcon />
    </button>
    <Caret c="#888" className="mx-[3px]" />
  </div>
);

const taskPane: [string, React.ReactNode][] = [
  ["资源", <CompassIcon />],
  ["主页", <HomeIcon />],
  ["设计库", <BooksIcon />],
  ["文件探索器", <OpenFolder />],
  ["视图调色板", <ViewPalette />],
  ["外观", <BallIcon />],
  ["自定义属性", <ListIcon />],
];

const Viewport = () => (
  <main className="relative min-w-0 flex-1 overflow-hidden border-y border-[#808080] bg-[linear-gradient(180deg,rgba(255,255,255,0)_53%,rgba(252,252,254,.6)_61%,#fdfdfe_69%,#fefefe_85%,#f4f5f8_100%),radial-gradient(ellipse_22%_50%_at_100%_5%,rgba(246,246,248,.8),rgba(246,246,248,0)),radial-gradient(ellipse_40%_60%_at_77%_55%,#dcdee9,rgba(221,224,235,0)),linear-gradient(155deg,#fff_18%,#fcfcfd_22%,#e8ebf2_36%,#dfe2ec_50%,#e3e6ee_100%)]">
    <div className="flex h-[30px] items-center">
      <span className="grow-[195]" />
      <HeadsUp />
      <span className="grow-[101]" />
      <div className="flex shrink-0 items-center gap-[13px] pr-[14px]">
        {["M2 4v5l3-2.500z", "M10 4v5L7 6.500z"].map((d) => (
          <Svg key={d} className="h-[14px] w-[13px]" box="0 0 12 13">
            <path d="M.7.700h10.600v11.600H.7z" stroke="#999" strokeWidth="1.300" />
            <path d={d} fill="#999" stroke="#999" />
          </Svg>
        ))}
        <span className="mt-2 h-0.5 w-[11px] bg-[#999]" />
        <Restore c="#999" />
        <CloseX c="#999" />
      </div>
    </div>
    <Model />
    <div className="absolute top-[50px] right-0 flex w-[27px] flex-col border-t border-l border-[#808080]">
      {taskPane.map(([n, ic], i) => (
        <button key={n} aria-label={n} className={`flex h-6 items-center justify-center overflow-hidden border-b border-[#808080] ${i ? "bg-[#d6d6d6]" : "bg-[#f7f7f7]"}`}>
          {ic}
        </button>
      ))}
    </div>
  </main>
);

/* ---------- tools menu ---------- */
type Item = { t: string; icon?: React.ReactNode; sub?: boolean; key?: string; on?: boolean; off?: boolean; hot?: boolean } | null;
const items: Item[] = [
  { t: "选择(L)", icon: <CursorIcon />, on: true },
  { t: "放大选项", icon: <MagSelIcon /> },
  { t: "框选取", icon: <BoxSelIcon />, on: true },
  { t: "套索选取", icon: <LassoIcon /> },
  { t: "在几何图形上选择", icon: <GeoSelIcon /> },
  { t: "选择所有", icon: <AllSelIcon />, key: "Ctrl+A" },
  { t: "逆转选择(I)", icon: <InvSelIcon />, off: true },
  null,
  { t: "比较", sub: true },
  { t: "查找/修改", sub: true },
  { t: "Design Checker", sub: true },
  { t: "格式涂刷器(E)...", icon: <PaintIcon /> },
  { t: "零部件选择(T)", sub: true },
  null,
  { t: "零部件(C)", sub: true },
  null,
  { t: "草图绘制实体(K)", sub: true },
  { t: "草图工具(K)", sub: true },
  { t: "草图设置(S)", sub: true },
  { t: "块", sub: true },
  { t: "样条曲线工具(I)", sub: true },
  { t: "尺寸(S)", sub: true },
  { t: "关系(O", sub: true },
  null,
  { t: "MBD Dimension", sub: true },
  null,
  { t: "重新组织零部件(G)..." },
  { t: "方程式(E)...", icon: <SigmaIcon /> },
  null,
  { t: "对称检查...", icon: <SymIcon /> },
  null,
  { t: "大型装配体设置(L)", icon: <FastAsmIcon /> },
  null,
  { t: "制作智能零部件(S)...", icon: <SmartPartIcon /> },
  null,
  { t: "宏(A)", sub: true },
  null,
  { t: "评估(E)", sub: true },
  null,
  { t: "插件(D)..." },
  { t: "保存/恢复设置..." },
  { t: "自定义(Z)..." },
  { t: "选项(P)...", icon: <GearIcon /> },
  null,
  { t: "Tools", sub: true, hot: true },
  null,
  { t: "自定义菜单(M)" },
];

const ToolsMenu = () => (
  <div className="absolute top-[104px] bottom-0 left-[349px] flex w-[282px] flex-col border-t border-r-2 border-l border-[#999] border-r-[#888] bg-[#f7f7f7] text-[12px] shadow-[3px_0_3px_rgba(0,0,0,.35)]">
    <div className="flex h-[21px] shrink-0 items-center bg-[#efefef] pl-[22px]">
      <svg viewBox="0 0 11 6" className="h-1.5 w-[11px]" aria-hidden="true">
        <path d="M5.500 0L11 6H0z" />
      </svg>
    </div>
    <ul className="shrink-0" role="menu">
      {items.map((it, i) =>
        it === null ? (
          <li key={i} role="separator" className="mr-0.5 ml-[34px] flex h-[10px] items-center">
            <span className="h-px w-full bg-[#c4c4c4]" />
          </li>
        ) : (
          <li key={i} role="none" className="relative">
            <button role="menuitem" disabled={it.off} className={`flex h-6 items-center text-left whitespace-nowrap ${it.hot ? "mx-0.5 w-[275px] border border-[#999] bg-white pl-px" : "w-full pl-1"} ${it.off ? "text-[#c0c0c0]" : "text-black"}`}>
              <span className={`flex size-6 shrink-0 items-center justify-center ${it.on ? "border-2 border-[#6a6a6e] bg-[#c6c6ca]" : ""}`}>{it.icon}</span>
              <span className="ml-[5px] flex-1">{it.t}</span>
              {it.key && <span className="mr-[27px]">{it.key}</span>}
              {it.sub && <RightTri className={it.hot ? "mr-[9px]" : "mr-3"} />}
            </button>
            {it.hot && (
              <div role="menu" className="absolute -top-[3px] left-[274px] z-10 flex h-[30px] w-[187px] items-center border border-r-2 border-b-2 border-[#999] bg-[#f7f7f7] shadow-[3px_3px_2px_rgba(0,0,0,.35)]">
                <button role="menuitem" className="h-full w-full pl-[33px] text-left">
                  Export as URDF
                </button>
              </div>
            )}
          </li>
        ),
      )}
    </ul>
    <div className="flex flex-1 items-start bg-[#efefef] pt-2.5 pl-[22px]">
      <svg viewBox="0 0 11 6" className="h-1.5 w-[11px]" aria-hidden="true">
        <path d="M5.500 6L11 0H0z" fill="#888" />
      </svg>
    </div>
  </div>
);

/* ---------- bottom ---------- */
const Bottom = () => (
  <footer className="shrink-0 bg-[#f7f7f7]">
    <div className="flex h-[15px] border-b border-[#808080] text-[13px] leading-[13px]">
      <div className="flex w-[349px] bg-white">
        <div className="flex w-[67px] border-r border-[#808080] bg-[#aaaaae] pl-0.5">
          {["M2 1v10M9 1L4 6l5 5z", "M8 1L3 6l5 5z", "M4 1l5 5-5 5z", "M3 1l5 5-5 5zM10 1v10"].map((d) => (
            <button key={d} aria-label="翻页" className="flex w-4 items-center justify-center border-r border-[#8c8c90]">
              <Svg className="size-3" box="0 0 12 12">
                <path d={d} fill="#8a8a8e" stroke="#8a8a8e" />
              </Svg>
            </button>
          ))}
        </div>
        <button className="w-[47px] border-r border-[#808080] bg-[#f7f7f7] pl-1">模型</button>
        <button className="w-[60px] border-r border-[#808080] bg-[#d4d4d4] whitespace-nowrap">3D 视图</button>
        <button className="w-[84px] border-r border-[#808080] bg-[#d4d4d4] pr-2 whitespace-nowrap">运动算例 1</button>
      </div>
      <span className="flex-1" />
    </div>
    <div className="flex h-[15px] items-start overflow-hidden text-[12px] leading-5">
      <span className="ml-auto w-[53px]">欠定义</span>
      <span className="w-[192px]">在编辑 装配体</span>
      <span className="w-[53px]">自定义</span>
      <Caret className="mt-2 rotate-180" />
      <Svg className="mt-0.5 mr-[3px] ml-[25px] size-[17px]">
        <path d="M1 6l5-5 11 6-4 8-11-5z" fill="#ddd" stroke="#333" strokeWidth="1.300" />
        <path d="M2 10v3l11 5 4-8" stroke="#333" />
        <circle cx="9" cy="8" r="2.500" stroke="#333" />
      </Svg>
    </div>
  </footer>
);

const Annotations = () => (
  <svg className="pointer-events-none absolute top-0 left-0 z-20 h-[1096px] w-[1920px]" viewBox="0 0 1920 1096" fill="none" stroke="#e81c1c" strokeWidth="4" strokeLinecap="round" strokeLinejoin="round" aria-hidden="true">
    <path d="M172 4c3 14 2 32-3 48M159 34c1 13 3 22 7 29 3-5 8-9 15-12" />
    <path d="M381 3c-1 16 0 32 1 47M372 44c4 5 8 11 11 18 3-8 6-14 10-20" />
    <path d="M219 1026c25-3 50-1 72 2 14 2 24 5 37 4M313 1016c14 1 22 7 20 14-2 7-11 12-17 18" />
    <path d="M987 1004c-28 1-45 8-79 11-45 3-50 12-80 18M837 1013c-3 13-12 22-22 31 12-3 24-2 41-3" />
  </svg>
);

export default function App() {
  return (
    <div className="relative flex h-screen flex-col overflow-hidden bg-white pt-[67px] font-['Noto_Sans','Noto_Sans_CJK_SC',sans-serif] text-black">
      <Defs />
      <TitleBar />
      <Ribbon />
      <div className="flex min-h-0 flex-1">
        <LeftPanel />
        <Viewport />
      </div>
      <Bottom />
      <ToolsMenu />
      <span className="absolute right-[13px] bottom-[7px] font-['Liberation_Sans',sans-serif] text-[19px] leading-5 text-[#9a9a9a]">CSDN @A080807</span>
      <Annotations />
    </div>
  );
}
